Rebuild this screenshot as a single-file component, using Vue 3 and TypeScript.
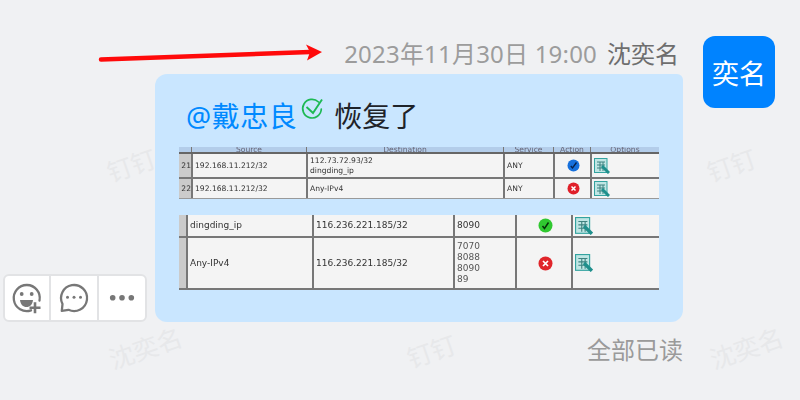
<script setup lang="ts">
type Mark = { text: string; x: number; y: number }

const marks: Mark[] = [
  { text: '钉钉', x: 131, y: 164 },
  { text: '钉钉', x: 731, y: 164 },
  { text: '沈奕名', x: 145, y: 347 },
  { text: '钉钉', x: 431, y: 350 },
  { text: '沈奕名', x: 746, y: 347 }
]
</script>

<template>
  <div class="page">
    <span
      v-for="mark in marks"
      :key="mark.x"
      class="mark"
      :style="{ left: mark.x + 'px', top: mark.y + 'px' }"
    >{{ mark.text }}</span>

    <svg class="arrow" width="240" height="30" viewBox="90 40 240 30">
      <path d="M101 59.5 L310 52" stroke="#ff0a0a" stroke-width="4.5" stroke-linecap="round" fill="none" />
      <path d="M306 44.5 L322 52 L307 60.5 L310 52 Z" fill="#ff0a0a" />
    </svg>

    <div class="content">
      <div class="head">
        <span class="time">2023年11月30日 19:00</span>
        <span class="name">沈奕名</span>
      </div>

      <div class="row">
        <div class="tools">
          <button class="tool">
            <svg width="32" height="32" viewBox="0 0 32 32" fill="none" stroke="#777" stroke-width="2.3">
              <path d="M20 28.3 A13 13 0 1 1 28.5 18.5" stroke-linecap="round" />
              <circle cx="10.7" cy="12" r="1.9" fill="#777" stroke="none" />
              <circle cx="20.7" cy="12" r="1.9" fill="#777" stroke="none" />
              <path d="M9 18 H22 C21.5 22.5 19 25 15.5 25 C12 25 9.5 22.5 9 18 Z" fill="#777" stroke="none" />
              <path d="M24 20.2 V31.2 M18.5 25.7 H29.5" stroke-width="2.6" />
            </svg>
          </button>
          <button class="tool">
            <svg width="32" height="32" viewBox="0 0 32 32" fill="none" stroke="#777" stroke-width="2.3">
              <path d="M10.5 27.8 A13 13 0 1 0 4.5 22 L3.8 28.8 Z" stroke-linejoin="round" />
              <circle cx="9.5" cy="15.3" r="1.5" fill="#777" stroke="none" />
              <circle cx="16" cy="15.3" r="1.5" fill="#777" stroke="none" />
              <circle cx="22.5" cy="15.3" r="1.5" fill="#777" stroke="none" />
            </svg>
          </button>
          <button class="tool">
            <svg width="32" height="32" viewBox="0 0 32 32" fill="#777">
              <circle cx="6.7" cy="15.7" r="2.8" />
              <circle cx="16" cy="15.7" r="2.8" />
              <circle cx="25.3" cy="15.7" r="2.8" />
            </svg>
          </button>
        </div>

        <div class="bubble">
          <div class="line">
            <span class="at">@戴忠良</span>
            <svg class="read" width="24" height="24" viewBox="0 0 24 24" fill="none" stroke="#1db954" stroke-width="1.7">
              <path d="M18.5 5 A9.3 9.3 0 1 0 21.3 12" stroke-linecap="round" />
              <path d="M6.5 10 L13 16 L22 2.5" stroke-width="1.9" />
            </svg>
            <span class="msg">恢复了</span>
          </div>

          <div class="shot">
            <div class="policy top">
              <div class="tr th">
                <span></span><span>Source</span><span>Destination</span><span>Service</span><span>Action</span><span>Options</span>
              </div>
              <div class="tr r1">
                <span class="no">21</span>
                <span>192.168.11.212/32</span>
                <span>112.73.72.93/32<br />dingding_ip</span>
                <span>ANY</span>
                <span class="mid">
                  <svg width="13" height="13" viewBox="0 0 13 13">
                    <circle cx="6.5" cy="6.5" r="6" fill="#1670dc" />
                    <path d="M3.8 7 L5.5 9 L9.5 3.5" stroke="#06204a" stroke-width="1.3" fill="none" />
                  </svg>
                </span>
                <span class="opt">
                  <svg width="16" height="16" viewBox="0 0 16 16">
                    <rect x="0.5" y="0.5" width="12.5" height="14" fill="#bfe6e4" stroke="#33a3a0" />
                    <path d="M3 4 H11 M3 7 H11 M3 10 H11 M6 4 V13 M9 4 V13" stroke="#3f8280" stroke-width="1" />
                    <path d="M8 8 L15 15" stroke="#1f8f8c" stroke-width="3" />
                  </svg>
                </span>
              </div>
              <div class="tr r2">
                <span class="no">22</span>
                <span>192.168.11.212/32</span>
                <span>Any-IPv4</span>
                <span>ANY</span>
                <span class="mid">
                  <svg width="13" height="13" viewBox="0 0 13 13">
                    <circle cx="6.5" cy="6.5" r="6" fill="#e0202a" />
                    <path d="M4.5 4.5 L8.5 8.5 M8.5 4.5 L4.5 8.5" stroke="#fff" stroke-width="1.5" />
                  </svg>
                </span>
                <span class="opt">
                  <svg width="16" height="16" viewBox="0 0 16 16">
                    <rect x="0.5" y="0.5" width="12.5" height="14" fill="#bfe6e4" stroke="#33a3a0" />
                    <path d="M3 4 H11 M3 7 H11 M3 10 H11 M6 4 V13 M9 4 V13" stroke="#3f8280" stroke-width="1" />
                    <path d="M8 8 L15 15" stroke="#1f8f8c" stroke-width="3" />
                  </svg>
                </span>
              </div>
            </div>

            <div class="policy bottom">
              <div class="tr r3">
                <span class="no"></span>
                <span>dingding_ip</span>
                <span>116.236.221.185/32</span>
                <span>8090</span>
                <span class="mid">
                  <svg width="15" height="15" viewBox="0 0 15 15">
                    <circle cx="7.5" cy="7.5" r="7" fill="#30c830" />
                    <path d="M4.5 8 L6.5 10.5 L10.5 4.5" stroke="#06300a" stroke-width="1.5" fill="none" />
                  </svg>
                </span>
                <span class="opt">
                  <svg width="18" height="18" viewBox="0 0 16 16">
                    <rect x="0.5" y="0.5" width="12.5" height="14" fill="#bfe6e4" stroke="#33a3a0" />
                    <path d="M3 4 H11 M3 7 H11 M3 10 H11 M6 4 V13 M9 4 V13" stroke="#3f8280" stroke-width="1" />
                    <path d="M8 8 L15 15" stroke="#1f8f8c" stroke-width="3" />
                  </svg>
                </span>
              </div>
              <div class="tr r4">
                <span class="no"></span>
                <span>Any-IPv4</span>
                <span>116.236.221.185/32</span>
                <span class="ports">7070<br />8088<br />8090<br />89</span>
                <span class="mid">
                  <svg width="15" height="15" viewBox="0 0 15 15">
                    <circle cx="7.5" cy="7.5" r="7" fill="#e0252a" />
                    <path d="M5 5 L10 10 M10 5 L5 10" stroke="#fff" stroke-width="1.7" />
                  </svg>
                </span>
                <span class="opt">
                  <svg width="18" height="18" viewBox="0 0 16 16">
                    <rect x="0.5" y="0.5" width="12.5" height="14" fill="#bfe6e4" stroke="#33a3a0" />
                    <path d="M3 4 H11 M3 7 H11 M3 10 H11 M6 4 V13 M9 4 V13" stroke="#3f8280" stroke-width="1" />
                    <path d="M8 8 L15 15" stroke="#1f8f8c" stroke-width="3" />
                  </svg>
                </span>
              </div>
            </div>
          </div>
        </div>
      </div>

      <div class="status">全部已读</div>
    </div>

    <div class="avatar">奕名</div>
  </div>
</template>

<style>
html,
body {
  margin: 0;
  background: #f0f1f3;
}
</style>

<style scoped>
.page {
  position: relative;
  width: 800px;
  height: 400px;
  box-sizing: border-box;
  overflow: hidden;
  display: flex;
  justify-content: flex-end;
  align-items: flex-start;
  gap: 20px;
  padding: 36px 25px 0 0;
  background: #f0f1f3;
  font-family: 'Noto Sans', 'Noto Sans CJK SC', sans-serif;
}

.mark {
  position: absolute;
  transform: translate(-50%, -50%) rotate(-19deg);
  font-size: 25px;
  color: #e7e8ea;
  white-space: nowrap;
}

.arrow {
  position: absolute;
  left: 90px;
  top: 40px;
}

.content {
  position: relative;
  display: flex;
  flex-direction: column;
  align-items: flex-end;
}

.head {
  height: 36px;
  margin-bottom: 2px;
  display: flex;
  align-items: center;
  gap: 10px;
  padding-right: 4px;
  font-size: 24px;
  line-height: 36px;
  white-space: nowrap;
}

.time {
  color: #9c9c9c;
  letter-spacing: 0.2px;
}

.name {
  color: #6e6e6e;
}

.row {
  display: flex;
  align-items: flex-end;
  gap: 8px;
}

.tools {
  display: flex;
  height: 48px;
  box-sizing: border-box;
  background: #fff;
  border: 2px solid #e2e3e5;
  border-radius: 6px;
}

.tool {
  width: 48px;
  box-sizing: border-box;
  padding: 0;
  border: 0;
  background: none;
  display: flex;
  align-items: center;
  justify-content: center;
}

.tool:first-child {
  width: 44px;
}

.tool + .tool {
  border-left: 2px solid #e2e3e5;
}

.bubble {
  width: 528px;
  height: 248px;
  box-sizing: border-box;
  padding: 22px 24px 0;
  background: #c9e6ff;
  border-radius: 12px 6px 12px 12px;
}

.line {
  height: 40px;
  margin-bottom: 11px;
  padding-left: 7px;
  display: flex;
  align-items: center;
  font-size: 28px;
  line-height: 40px;
  white-space: nowrap;
}

.at {
  color: #0089ff;
  letter-spacing: 0.5px;
}

.read {
  align-self: flex-start;
  margin: 1px 10px 0 3px;
}

.msg {
  color: #1f2329;
}

.shot {
  width: 480px;
  font-family: 'DejaVu Sans', sans-serif;
  font-size: 7.6px;
  line-height: 10px;
  color: #333;
  filter: blur(0.35px);
}

.policy {
  background: #f4f4f4;
}

.tr {
  display: grid;
  box-sizing: border-box;
  border-bottom: 1px solid #777;
}

.tr > span {
  display: flex;
  align-items: center;
  padding-left: 2px;
  border-left: 2px solid #777;
  overflow: hidden;
}

.tr > span:first-child {
  border-left: 0;
  padding: 0;
}

.top .tr {
  grid-template-columns: 12px 115px 197px 50px 37px 69px;
}

.th {
  height: 7px;
  background: #b3cdea;
  border-bottom: 2px solid #666;
}

.th > span {
  justify-content: center;
  align-items: flex-end;
  padding-left: 0;
  line-height: 5px;
  color: #667;
  border-left-width: 1px;
}

.r1 {
  height: 25px;
  border-bottom-width: 2px;
}

.r2 {
  height: 20px;
  border-bottom-color: #999;
}

.no {
  background: #cbcbcb;
  justify-content: flex-end;
}

.mid {
  justify-content: center;
}

.bottom {
  margin-top: 16px;
  font-size: 9px;
  line-height: 11px;
}

.bottom .tr {
  grid-template-columns: 7px 126px 141px 62px 56px 88px;
}

.r3 {
  height: 23px;
  border-bottom-width: 2px;
}

.r4 {
  height: 52px;
  border-bottom-width: 2px;
}

.ports {
  color: #555;
}

.status {
  margin-top: 7px;
  font-size: 24px;
  line-height: 42px;
  color: #9a9a9a;
}

.avatar {
  width: 72px;
  height: 72px;
  border-radius: 12px;
  background: #0083ff;
  color: #fff;
  font-size: 27px;
  display: flex;
  align-items: center;
  justify-content: center;
}
</style>
